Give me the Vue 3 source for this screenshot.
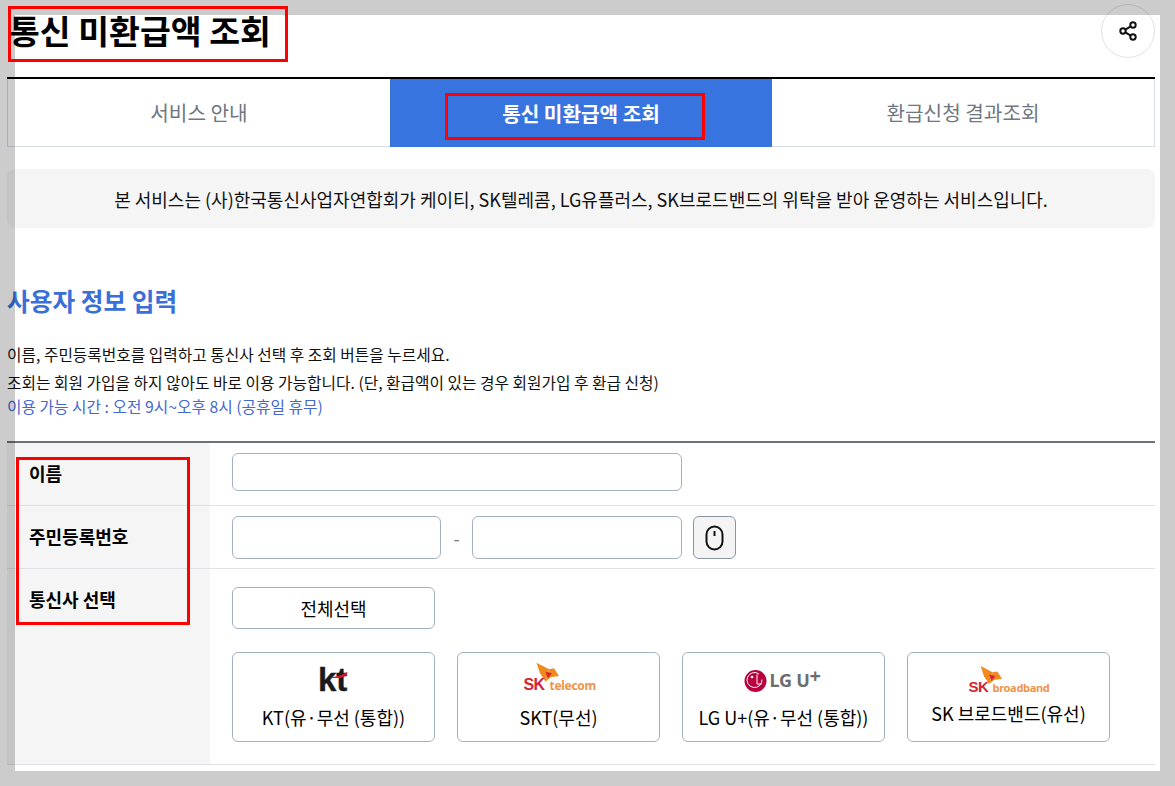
<script setup>
const tabs = [
  { label: '서비스 안내', active: false },
  { label: '통신 미환급액 조회', active: true },
  { label: '환급신청 결과조회', active: false },
]
</script>

<template>
  <div class="page">
    <header class="head">
      <h1 class="title">통신 미환급액 조회</h1>
      <button class="share" aria-label="공유">
        <svg width="20" height="20" viewBox="0 0 20 20" fill="none" stroke="#111" stroke-width="2">
          <circle cx="15" cy="4" r="2.700" />
          <circle cx="5" cy="10" r="2.700" />
          <circle cx="15" cy="16" r="2.700" />
          <path d="M7.400 8.600l5.300-3.200M7.400 11.400l5.300 3.200" />
        </svg>
      </button>
    </header>

    <nav class="tabs">
      <a v-for="t in tabs" :key="t.label" class="tab" :class="{ active: t.active }">{{ t.label }}</a>
    </nav>

    <p class="notice">본 서비스는 (사)한국통신사업자연합회가 케이티, SK텔레콤, LG유플러스, SK브로드밴드의 위탁을 받아 운영하는 서비스입니다.</p>

    <h2 class="section">사용자 정보 입력</h2>

    <div class="desc">
      <p>이름, 주민등록번호를 입력하고 통신사 선택 후 조회 버튼을 누르세요.</p>
      <p class="second">조회는 회원 가입을 하지 않아도 바로 이용 가능합니다. (단, 환급액이 있는 경우 회원가입 후 환급 신청)</p>
      <p class="blue">이용 가능 시간 : 오전 9시~오후 8시 (공휴일 휴무)</p>
    </div>

    <div class="form">
      <div class="row">
        <div class="th">이름</div>
        <div class="td"><input class="input wide" /></div>
      </div>
      <div class="row">
        <div class="th">주민등록번호</div>
        <div class="td">
          <input class="input rrn" />
          <span class="dash">-</span>
          <input class="input rrn" />
          <button class="mouse" aria-label="보안 키패드">
            <svg width="20" height="26" viewBox="0 0 20 26" fill="none" stroke="#111" stroke-width="2">
              <rect x="1.500" y="1.500" width="16" height="23" rx="8" />
              <path d="M9.500 6v5" />
            </svg>
          </button>
        </div>
      </div>
      <div class="row tall">
        <div class="th">통신사 선택</div>
        <div class="td carriers">
          <button class="all">전체선택</button>
          <div class="cards">
            <button class="card">
              <svg class="logo" width="120" height="30" viewBox="0 0 120 30">
                <text x="44" y="27" class="kt">kt</text>
                <path d="M56 13.500C62 13 68 11 73.500 8 73 11 71 13 67 13.800 63 14.300 59 14.200 56 13.500z" fill="#e0112b" />
              </svg>
              <span>KT(유·무선 (통합))</span>
            </button>
            <button class="card">
              <svg class="logo" width="120" height="30" viewBox="0 0 120 30">
                <g>
                  <path d="M37.500-1.300L50 5.300 46.500 17.700 41 9.300z" fill="#ef8a1f" />
                  <path d="M50 5.300L55 4.300 60 12 51.500 13.300 46.500 17.700z" fill="#ef8a1f" />
                  <path d="M46.500 7.700L53 9.300 49 14.300z" fill="#d8232f" />
                </g>
                <text x="24.500" y="26" class="sk">SK</text>
                <text x="50.500" y="26" class="tel">telecom</text>
              </svg>
              <span>SKT(무선)</span>
            </button>
            <button class="card">
              <svg class="logo" width="120" height="30" viewBox="0 0 120 30">
                <circle cx="31.500" cy="17" r="11" fill="#b8003f" />
                <circle cx="28" cy="13" r="1.300" fill="#fff" />
                <path d="M33 10.500v9.500h4.500M38 15.500a7.500 7.500 0 1 1-3-5.500" fill="none" stroke="#fff" stroke-width="1" />
                <text x="45.500" y="23" class="lg">LG U</text>
                <text x="85.500" y="18.500" class="lgp">+</text>
              </svg>
              <span>LG U+(유·무선 (통합))</span>
            </button>
            <button class="card bb">
              <svg class="logo" width="120" height="30" viewBox="0 0 120 30">
                <g transform="translate(-4 3.300) scale(.95)">
                  <path d="M37.500-1.300L50 5.300 46.500 17.700 41 9.300z" fill="#ef8a1f" />
                  <path d="M50 5.300L55 4.300 60 12 51.500 13.300 46.500 17.700z" fill="#ef8a1f" />
                  <path d="M46.500 7.700L53 9.300 49 14.300z" fill="#d8232f" />
                </g>
                <text x="19.500" y="28" class="sk small">SK</text>
                <text x="43.500" y="28" class="tel brd">broadband</text>
              </svg>
              <span>SK 브로드밴드(유선)</span>
            </button>
          </div>
        </div>
      </div>
    </div>

    <div class="frame top"></div>
    <div class="frame left"></div>
    <div class="frame right"></div>
    <div class="frame bottom"></div>

    <div class="mark m-title"></div>
    <div class="mark m-tab"></div>
    <div class="mark m-th"></div>
  </div>
</template>

<style scoped>
.page {
  position: relative;
  width: 1175px;
  height: 786px;
  overflow: hidden;
  box-sizing: border-box;
  padding: 0 20px 0 7px;
  background: #fff;
  color: #000;
  font-family: "Noto Sans CJK KR", "Noto Sans", sans-serif;
}
.head {
  height: 77px;
  display: flex;
  justify-content: space-between;
  align-items: flex-start;
}
.title {
  margin: 8px 0 0 2px;
  font-size: 33.500px;
  line-height: 44px;
  font-weight: 700;
}
.share {
  margin-top: 4px;
  width: 54px;
  height: 54px;
  padding: 0;
  border: 1px solid #dfe3e8;
  border-radius: 50%;
  background: #fff;
  display: flex;
  align-items: center;
  justify-content: center;
}
.tabs {
  display: grid;
  grid-template-columns: 383px 382px 383px;
  height: 70px;
  box-sizing: border-box;
  border-top: 2px solid #000;
}
.tab {
  display: flex;
  align-items: center;
  justify-content: center;
  font-size: 20.200px;
  color: #6f7780;
  border: solid #d5dde5;
  border-width: 0 0 1px 0;
}
.tab:first-child { border-left-width: 1px; }
.tab:last-child { border-right-width: 1px; }
.tab.active {
  background: #3874e0;
  color: #fff;
  font-weight: 700;
  border: 0;
}
.notice {
  margin: 22px 0 0;
  height: 59px;
  display: flex;
  align-items: center;
  justify-content: center;
  background: #f5f5f5;
  border-radius: 8px;
  font-size: 18px;
  color: #111;
}
.section {
  margin: 54px 0 0;
  font-size: 24.700px;
  line-height: 36px;
  font-weight: 700;
  color: #3a6fd8;
}
.desc { margin-top: 24px; font-size: 15.750px; line-height: 25px; color: #111; }
.desc p { margin: 0; }
.desc .second { margin-top: 3px; }
.desc .blue { color: #4468cf; margin-top: -1px; }
.form { margin-top: 22px; border-top: 2px solid #6b7278; }
.row {
  display: grid;
  grid-template-columns: 203px 1fr;
  height: 63px;
  border-bottom: 1px solid #dfe3e8;
  box-sizing: border-box;
}
.row.tall { height: 196px; }
.th {
  background: #f5f5f5;
  padding: 18px 0 0 22px;
  font-size: 18px;
  line-height: 24px;
  font-weight: 700;
}
.td { padding-left: 22px; display: flex; align-items: flex-start; }
.input {
  box-sizing: border-box;
  border: 1px solid #a4b1c0;
  border-radius: 6px;
  background: #fff;
  margin: 0;
  padding: 0 10px;
  outline: none;
}
.wide { width: 450px; height: 38px; margin-top: 10px; }
.rrn { width: 209px; height: 43px; margin-top: 10px; }
.rrn:last-of-type { width: 210px; }
.dash { width: 31px; text-align: center; margin-top: 20px; font-size: 18px; line-height: 24px; color: #777; }
.mouse {
  box-sizing: border-box;
  width: 43px;
  height: 43px;
  margin: 10px 0 0 11px;
  padding: 0;
  border: 1px solid #8a96a3;
  border-radius: 6px;
  background: #f4f4f4;
  display: flex;
  align-items: center;
  justify-content: center;
}
.carriers { flex-direction: column; }
.all, .card {
  font-family: inherit;
  box-sizing: border-box;
  border: 1px solid #a4b1c0;
  border-radius: 6px;
  background: #fff;
  color: #000;
  padding: 0;
  font-size: 18px;
}
.all { width: 203px; height: 42px; margin-top: 18px; }
.cards { display: flex; gap: 22px; margin-top: 23px; }
.card {
  width: 203px;
  height: 90px;
  display: flex;
  flex-direction: column;
  align-items: center;
  padding-top: 11px;
}
.card span { line-height: 26px; margin-top: 10px; }
.card.bb span { margin-top: 6px; }
.logo { display: block; overflow: visible; }
.kt { font: 700 33px "Liberation Sans", sans-serif; fill: #1a1a1a; stroke: #1a1a1a; stroke-width: .4px; }
.sk { font: 700 16px "Liberation Sans", sans-serif; fill: #d8232f; letter-spacing: -.6px; }
.sk.small { font-size: 15px; }
.tel { font: 700 12px "Noto Sans", sans-serif; fill: #f0934a; letter-spacing: -.3px; }
.brd { font-size: 11px; }
.lg { font: 700 18px "Noto Sans", sans-serif; fill: #6d6d6d; letter-spacing: -.2px; }
.lgp { font: 700 20px "Noto Sans", sans-serif; fill: #6d6d6d; }
.frame { position: absolute; background: rgba(0, 0, 0, .2); }
.top { left: 0; right: 0; top: 0; height: 15px; }
.left { left: 0; width: 15px; top: 15px; bottom: 15px; }
.right { right: 0; width: 15px; top: 15px; bottom: 15px; }
.bottom { left: 0; right: 0; bottom: 0; height: 15px; }
.mark { position: absolute; border: 3px solid #f00; box-sizing: border-box; }
.m-title { left: 8px; top: 6px; width: 280px; height: 56px; }
.m-tab { left: 445px; top: 93px; width: 260px; height: 47px; }
.m-th { left: 16px; top: 457px; width: 174px; height: 168px; }
</style>
